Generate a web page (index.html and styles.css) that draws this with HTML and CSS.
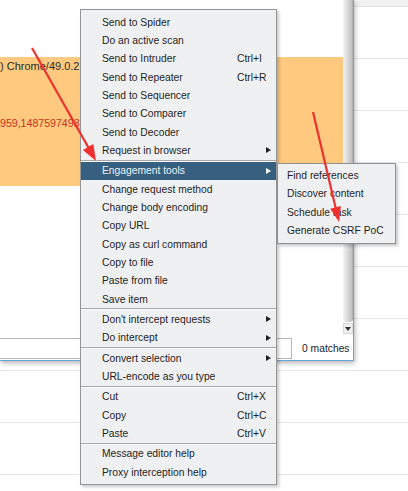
FILE: index.html
```html
<!DOCTYPE html>
<html>
<head>
<meta charset="utf-8">
<link rel="stylesheet" href="styles.css">
</head>
<body>
<div class="table">
  <div class="head"></div>
  <div class="row"></div><div class="row"></div><div class="row"></div>
  <div class="row"></div><div class="row"></div><div class="row"></div>
  <div class="row"></div><div class="row"></div><div class="row"></div>
</div>

<div class="window">
  <div class="viewer">
    <div class="content">
      <div class="band">
        <div class="ua">) Chrome/49.0.2</div>
        <div class="red">959,1487597493</div>
      </div>
    </div>
    <div class="scrollbar">
      <div class="thumb"></div>
      <div class="arrow-btn"><span class="down"></span></div>
    </div>
  </div>
  <div class="search">
    <div class="field"></div>
    <div class="matches">0 matches</div>
  </div>
</div>

<div class="menu">
  <div class="item"><span>Send to Spider</span></div>
  <div class="item"><span>Do an active scan</span></div>
  <div class="item"><span>Send to Intruder</span><span>Ctrl+I</span></div>
  <div class="item"><span>Send to Repeater</span><span>Ctrl+R</span></div>
  <div class="item"><span>Send to Sequencer</span></div>
  <div class="item"><span>Send to Comparer</span></div>
  <div class="item"><span>Send to Decoder</span></div>
  <div class="item"><span>Request in browser</span><span></span><span class="sub"></span></div>
  <div class="sep"></div>
  <div class="item active"><span>Engagement tools</span><span></span><span class="sub"></span></div>
  <div class="item"><span>Change request method</span></div>
  <div class="item"><span>Change body encoding</span></div>
  <div class="item"><span>Copy URL</span></div>
  <div class="item"><span>Copy as curl command</span></div>
  <div class="item"><span>Copy to file</span></div>
  <div class="item"><span>Paste from file</span></div>
  <div class="item"><span>Save item</span></div>
  <div class="sep"></div>
  <div class="item"><span>Don't intercept requests</span><span></span><span class="sub"></span></div>
  <div class="item"><span>Do intercept</span><span></span><span class="sub"></span></div>
  <div class="sep"></div>
  <div class="item"><span>Convert selection</span><span></span><span class="sub"></span></div>
  <div class="item"><span>URL-encode as you type</span></div>
  <div class="sep"></div>
  <div class="item"><span>Cut</span><span>Ctrl+X</span></div>
  <div class="item"><span>Copy</span><span>Ctrl+C</span></div>
  <div class="item"><span>Paste</span><span>Ctrl+V</span></div>
  <div class="sep"></div>
  <div class="item"><span>Message editor help</span></div>
  <div class="item"><span>Proxy interception help</span></div>
</div>

<div class="submenu">
  <div class="sitem">Find references</div>
  <div class="sitem">Discover content</div>
  <div class="sitem">Schedule task</div>
  <div class="sitem">Generate CSRF PoC</div>
</div>

<svg class="annot" width="408" height="491" viewBox="0 0 408 491">
  <line x1="32" y1="48" x2="89" y2="148.5" stroke="#f0302e" stroke-width="2.2"/>
  <polygon points="96,161 82.9,150.1 93.3,144.1" fill="#f0302e"/>
  <line x1="313" y1="112" x2="335.8" y2="208.5" stroke="#f0302e" stroke-width="2.2"/>
  <polygon points="339,222 330.2,208.7 340.9,206.1" fill="#f0302e"/>
</svg>
</body>
</html>
```
FILE: styles.css
```css
* { box-sizing: border-box; }
html, body { margin: 0; padding: 0; }
body {
  width: 408px;
  height: 491px;
  overflow: hidden;
  position: relative;
  background: #fff;
  font-family: "Liberation Sans", Arial, sans-serif;
  font-size: 10.3px;
  color: #1e1e1e;
}

/* background table */
.table .head { height: 7px; background: #f1f1f1; border-bottom: 1px solid #e2e2e2; }
.table .row { height: 52px; border-bottom: 1px solid #e6e6e6; }

/* floating dialog window */
.window {
  position: absolute;
  left: 0;
  top: 0;
  width: 354px;
  height: 361px;
  background: #fff;
  border-right: 1px solid #68a3dd;
  border-bottom: 1px solid #68a3dd;
  box-shadow: 1px 2px 5px rgba(0, 0, 0, 0.3);
  display: flex;
  flex-direction: column;
}
.viewer { height: 335px; display: flex; }
.content { flex: 1; background: #fff; overflow: hidden; }
.band {
  margin-top: 57px;
  height: 129px;
  background: #ffca80;
  white-space: nowrap;
  font-size: 11px;
}
.ua { margin-top: 14px; line-height: 18px; color: #2a2a2a; }
.red { margin-top: 39px; line-height: 18px; color: #c4321e; font-size: 10.6px; }

.scrollbar { width: 10px; display: flex; flex-direction: column; padding-bottom: 1px; }
.thumb {
  flex: 1;
  background: linear-gradient(to right, #f5f5f5, #dadada 45%, #c2c2c2 85%, #a9a9a9);
  border-radius: 0 0 3px 3px;
}
.arrow-btn {
  height: 11px;
  margin-top: 1px;
  background: #eeeeee;
  border: 1px solid #d8d8d8;
  display: flex;
  align-items: center;
  justify-content: center;
}
.down {
  width: 0; height: 0;
  border-top: 4px solid #333;
  border-left: 3px solid transparent;
  border-right: 3px solid transparent;
}

.search { flex: 1; display: flex; align-items: flex-start; padding-top: 3px; }
.field {
  margin-left: -2px;
  width: 294px;
  height: 21px;
  border: 1px solid #b8b8b8;
  background: #fff;
}
.matches { margin-left: 10px; line-height: 21px; color: #222; white-space: nowrap; }

/* context menu */
.menu {
  position: absolute;
  left: 80px;
  top: 9px;
  width: 197px;
  background: #eff0f2;
  border: 1px solid #959595;
  padding: 3px 0;
  box-shadow: 2px 2px 3px rgba(0, 0, 0, 0.22);
}
.item {
  height: 18.33px;
  display: grid;
  grid-template-columns: 135px 1fr 5px;
  align-items: center;
  padding: 0 5px 0 21px;
  white-space: nowrap;
}
.item.active { background: #365f80; color: #eef3f7; }
.sep { height: 2px; border-top: 1px solid #a8a8a8; border-bottom: 1px solid #fbfbfb; }
.sub {
  width: 0; height: 0;
  border-left: 5px solid #222;
  border-top: 3px solid transparent;
  border-bottom: 3px solid transparent;
}
.item.active .sub { border-left-color: #ffffff; }

.submenu {
  position: absolute;
  left: 277px;
  top: 163px;
  width: 119px;
  background: #eff0f2;
  border: 1px solid #8f8f8f;
  padding: 3px 0;
  box-shadow: 2px 2px 3px rgba(0, 0, 0, 0.22);
}
.sitem { height: 18.33px; line-height: 18.33px; padding-left: 9px; white-space: nowrap; }

.annot { position: absolute; left: 0; top: 0; pointer-events: none; }
```
